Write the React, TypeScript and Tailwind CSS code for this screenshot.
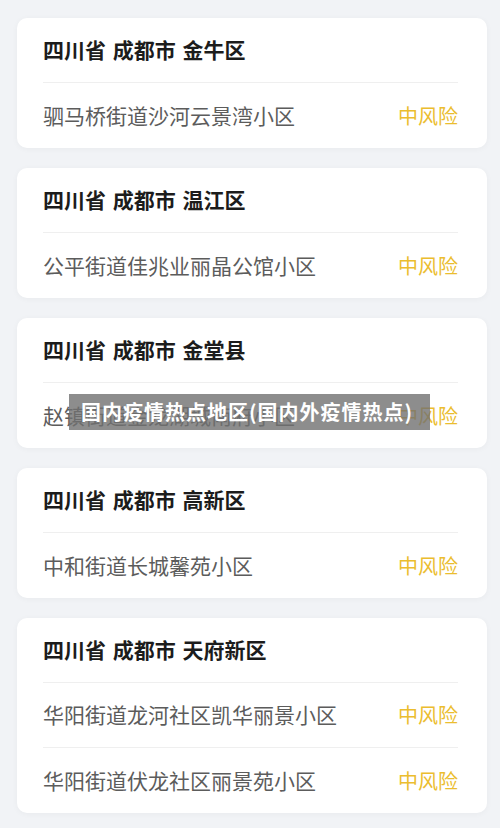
const font = { fontFamily: '"Noto Sans CJK SC", "Noto Sans", sans-serif' };

type Area = {
  title: string;
  places: string[];
};

const areas: Area[] = [
  { title: "四川省 成都市 金牛区", places: ["驷马桥街道沙河云景湾小区"] },
  { title: "四川省 成都市 温江区", places: ["公平街道佳兆业丽晶公馆小区"] },
  { title: "四川省 成都市 金堂县", places: ["赵镇街道金龙湖城南府小区"] },
  { title: "四川省 成都市 高新区", places: ["中和街道长城馨苑小区"] },
  {
    title: "四川省 成都市 天府新区",
    places: ["华阳街道龙河社区凯华丽景小区", "华阳街道伏龙社区丽景苑小区"],
  },
];

function AreaCard({ area, children }: { area: Area; children?: React.ReactNode }) {
  return (
    <div className="relative bg-white rounded-[10px] shadow-[0_1px_6px_rgba(0,0,0,0.04)]">
      <div className="pl-[26px] pr-[29px]">
        <div className="h-[65px] pb-[3px] border-b border-[#efefef] flex items-center">
          <h2 className="text-[21px] leading-[28px] font-bold text-[#1c1c1c] [word-spacing:2px]">{area.title}</h2>
        </div>
        {area.places.map((p, i) => (
          <div
            key={p}
            className={
              "h-[65px] flex items-center justify-between " +
              (i < area.places.length - 1 ? "border-b border-[#efefef]" : "")
            }
          >
            <span className="text-[21px] text-[#5c5c5c]">{p}</span>
            <span className="text-[20px] text-[#ebbd2f]">中风险</span>
          </div>
        ))}
      </div>
      {children}
    </div>
  );
}

export default function App() {
  return (
    <div className="w-[500px] h-[828px] bg-[#f1f3f6] pl-[17px] pr-[13px] pt-[18px] flex flex-col gap-[20px] overflow-hidden" style={font}>
      {areas.map((a, i) => (
        <AreaCard key={a.title} area={a}>
          {i === 2 && (
            <div className="absolute left-[52px] top-[76px] w-[361px] h-[36px] bg-[rgba(112,112,112,0.8)] flex items-center pl-[12px]">
              <span className="text-white text-[20px] font-bold tracking-[1px] leading-none">
                国内疫情热点地区(国内外疫情热点)
              </span>
            </div>
          )}
        </AreaCard>
      ))}
    </div>
  );
}
